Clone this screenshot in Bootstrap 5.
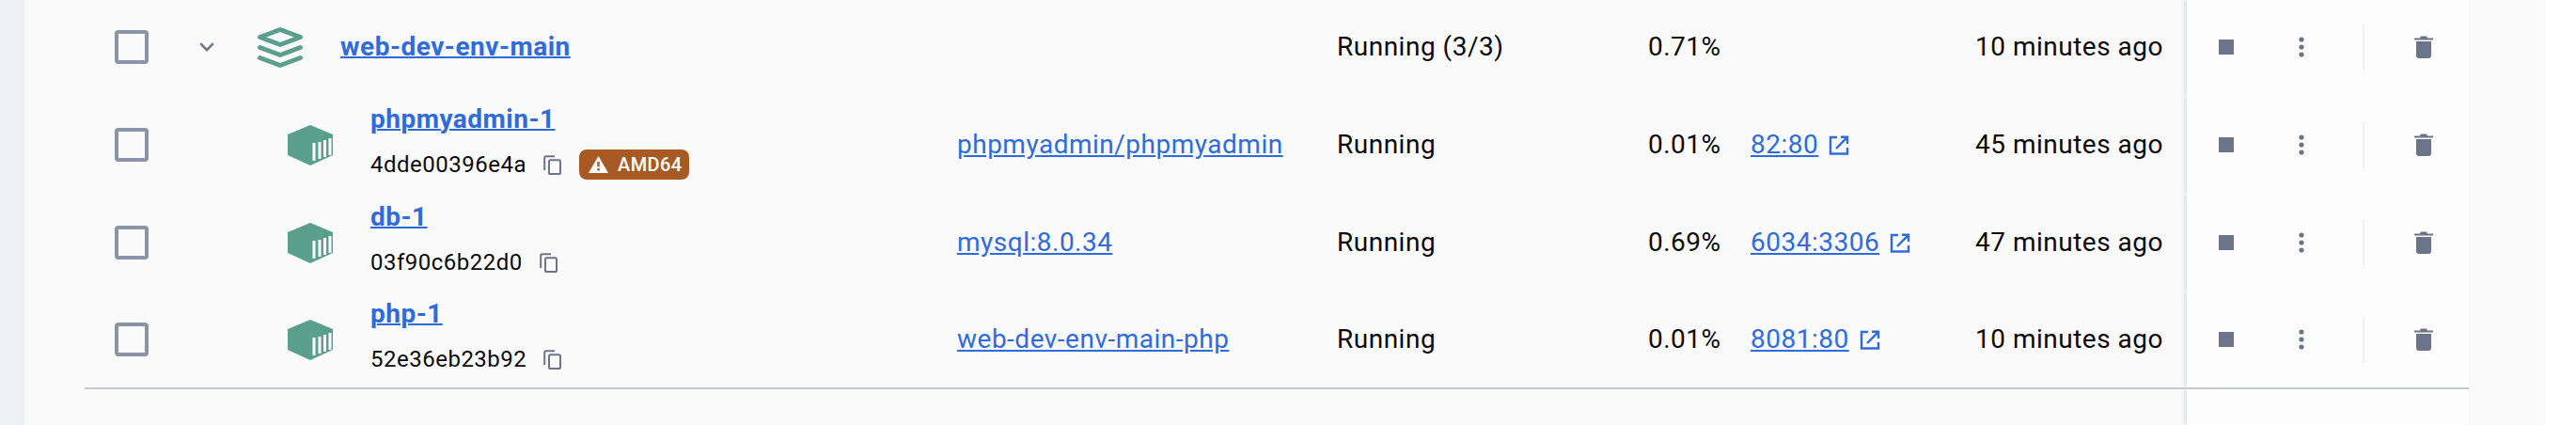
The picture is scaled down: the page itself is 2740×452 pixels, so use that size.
<!DOCTYPE html>
<html lang="en">
<head>
    <meta charset="UTF-8">
    <title>Containers</title>
    <link href="https://cdn.jsdelivr.net/npm/bootstrap@5.3.0/dist/css/bootstrap.min.css" rel="stylesheet">
    <style>
        body { background: #fff; font-family: Roboto, "Liberation Sans", sans-serif; font-size: 28px; letter-spacing: .5px; color: #0a0a0a; overflow: hidden; }
        a { color: #2f6bd9; }
        .page-rail { width: 26px; height: 452px; background: #eff0f3; flex: none; }
        .page-main { width: 2681px; height: 452px; padding-left: 64px; background: #fafafb; flex: none; }
        .app-row { height: 104px; width: 2536px; }
        .app-row.first-row { height: 102px; }
        .app-row.first-row > .cell-check, .app-row.first-row > .cell-name, .app-row.first-row > .cell-image,
        .app-row.first-row > .cell-status, .app-row.first-row > .cell-cpu, .app-row.first-row > .cell-ports,
        .app-row.first-row > .cell-time { padding-bottom: 2px; }
        .app-row.last-row { border-bottom: 2px solid #c4c8d6; height: 104px; }
        .cell-check { width: 122px; padding-left: 32px; flex: none; }
        .cell-name { width: 806px; flex: none; }
        .cell-image { width: 404px; flex: none; }
        .cell-status { width: 331px; flex: none; }
        .cell-cpu { width: 109px; flex: none; }
        .cell-ports { width: 200px; flex: none; }
        .cell-time { width: 239px; flex: none; text-align: right; }
        .cell-actions { width: 300px; margin-left: 25px; flex: none; align-self: stretch; padding-left: 34px; background: #fdfdfd; box-shadow: -3px 0 4px rgba(20, 25, 40, .1); clip-path: inset(0 0 0 -10px); }
        .first-row .cell-actions { padding-bottom: 2px; }
        .panel-rest { height: 38px; width: 300px; margin-left: 2236px; background: #fdfdfd; box-shadow: -3px 0 4px rgba(20, 25, 40, .1); clip-path: inset(0 0 0 -10px); }
        .fake-check { width: 36px; height: 36px; border: 4px solid #8b93a6; border-radius: 4px; display: block; }
        .tree-toggle { width: 16px; height: 10px; margin-right: 46px; }
        .stack-icon { width: 48px; height: 43px; margin-right: 40px; }
        .box-icon { width: 48px; height: 43px; margin-left: 94px; margin-right: 40px; }
        .name-link { font-weight: 700; letter-spacing: .5px; text-decoration-thickness: 2px; }
        .name-block { line-height: 34px; margin-bottom: 7px; }
        .id-line { font-size: 24px; letter-spacing: .5px; line-height: 32px; margin-top: 15px; }
        .copy-icon { width: 19px; height: 21px; margin-left: 18px; }
        .arch-tag { background: #a85a24; color: #fff; font-size: 20px; font-weight: 500; letter-spacing: .4px; height: 32px; width: 117px; border-radius: 8px; margin-left: 19px; padding-left: 10px; }
        .arch-tag svg { width: 21px; height: 18px; margin-right: 10px; }
        .ext-icon { width: 22px; height: 21px; margin-left: 11px; }
        .stop-icon { width: 16px; height: 16px; background: #6c7489; }
        .dots-icon { width: 6px; height: 22px; margin-left: 69px; }
        .action-sep { width: 2px; height: 48px; background: #f0f0f2; margin-left: 62px; }
        .trash-icon { width: 20px; height: 24px; margin-left: 53px; }
    </style>
</head>
<body>
    <svg width="0" height="0" class="position-absolute">
        <symbol id="i-copy" viewBox="0 0 19 21">
            <path d="M1.2 16V3a1.8 1.8 0 0 1 1.8-1.8h9" fill="none" stroke="#6c7489" stroke-width="2"/>
            <rect x="6" y="5.2" width="12" height="14.8" rx="1.6" fill="none" stroke="#6c7489" stroke-width="2"/>
        </symbol>
        <symbol id="i-box" viewBox="0 0 48 43">
            <path d="M24 0 48 10V32L24 43 0 32V10Z" fill="#5a9e8c"/>
            <path d="M28 19V38M34 18V36M39.5 16V34M45 14V32" stroke="#fff" stroke-width="3"/>
        </symbol>
        <symbol id="i-ext" viewBox="0 0 22 21">
            <path d="M9 2H2V19.500H20V13" fill="none" stroke="#2f6bd9" stroke-width="2.400"/>
            <path d="M13 1.800H20V9M19.500 2.300 8 14" fill="none" stroke="#2f6bd9" stroke-width="2.400"/>
        </symbol>
        <symbol id="i-dots" viewBox="0 0 6 22">
            <circle cx="3" cy="3" r="2.600" fill="#6c7489"/>
            <circle cx="3" cy="11" r="2.600" fill="#6c7489"/>
            <circle cx="3" cy="19" r="2.600" fill="#6c7489"/>
        </symbol>
        <symbol id="i-trash" viewBox="0 0 20 24">
            <path d="M0 2.500H6L7 .5H13L14 2.500H20V4.500H0Z" fill="#6c7489"/>
            <path d="M2 6H18V21A3 3 0 0 1 15 24H5A3 3 0 0 1 2 21Z" fill="#6c7489"/>
        </symbol>
    </svg>

    <div class="d-flex">
        <div class="page-rail"></div>
        <div class="page-main">
            <!-- group row -->
            <div class="app-row first-row d-flex align-items-center">
                <div class="cell-check"><span class="fake-check"></span></div>
                <div class="cell-name d-flex align-items-center">
                    <svg class="tree-toggle" viewBox="0 0 16 10"><path d="M1.200 1.200 8 8.200 14.800 1.200" fill="none" stroke="#6c7489" stroke-width="2.400"/></svg>
                    <svg class="stack-icon" viewBox="0 0 48 43">
                        <path d="M24 2.500 45.500 10.500 24 18.500 2.500 10.500Z" fill="none" stroke="#5a9e8c" stroke-width="5" stroke-linejoin="round"/>
                        <path d="M2.500 21.500 24 29.500 45.500 21.500M2.500 32.500 24 40.500 45.500 32.500" fill="none" stroke="#5a9e8c" stroke-width="5" stroke-linecap="round" stroke-linejoin="round"/>
                    </svg>
                    <a href="#" class="name-link">web-dev-env-main</a>
                </div>
                <div class="cell-image"></div>
                <div class="cell-status">Running (3/3)</div>
                <div class="cell-cpu">0.71%</div>
                <div class="cell-ports"></div>
                <div class="cell-time">10 minutes ago</div>
                <div class="cell-actions d-flex align-items-center">
                    <span class="stop-icon"></span>
                    <svg class="dots-icon"><use href="#i-dots"/></svg>
                    <span class="action-sep"></span>
                    <svg class="trash-icon"><use href="#i-trash"/></svg>
                </div>
            </div>

            <!-- containers -->
            <div class="app-row d-flex align-items-center">
                <div class="cell-check"><span class="fake-check"></span></div>
                <div class="cell-name d-flex align-items-center">
                    <svg class="box-icon"><use href="#i-box"/></svg>
                    <div class="name-block">
                        <a href="#" class="name-link">phpmyadmin-1</a>
                        <div class="id-line d-flex align-items-center">4dde00396e4a
                            <svg class="copy-icon"><use href="#i-copy"/></svg>
                            <span class="arch-tag d-flex align-items-center">
                                <svg viewBox="0 0 21 18"><path d="M10.500 0 21 18H0Z" fill="#fff"/><path d="M9.300 6H11.700V11.500H9.300ZM9.300 13H11.700V15.500H9.300Z" fill="#a85a24"/></svg>AMD64
                            </span>
                        </div>
                    </div>
                </div>
                <div class="cell-image"><a href="#">phpmyadmin/phpmyadmin</a></div>
                <div class="cell-status">Running</div>
                <div class="cell-cpu">0.01%</div>
                <div class="cell-ports d-flex align-items-center"><a href="#">82:80</a><svg class="ext-icon"><use href="#i-ext"/></svg></div>
                <div class="cell-time">45 minutes ago</div>
                <div class="cell-actions d-flex align-items-center">
                    <span class="stop-icon"></span>
                    <svg class="dots-icon"><use href="#i-dots"/></svg>
                    <span class="action-sep"></span>
                    <svg class="trash-icon"><use href="#i-trash"/></svg>
                </div>
            </div>

            <div class="app-row d-flex align-items-center">
                <div class="cell-check"><span class="fake-check"></span></div>
                <div class="cell-name d-flex align-items-center">
                    <svg class="box-icon"><use href="#i-box"/></svg>
                    <div class="name-block">
                        <a href="#" class="name-link">db-1</a>
                        <div class="id-line d-flex align-items-center">03f90c6b22d0
                            <svg class="copy-icon"><use href="#i-copy"/></svg>
                        </div>
                    </div>
                </div>
                <div class="cell-image"><a href="#">mysql:8.0.34</a></div>
                <div class="cell-status">Running</div>
                <div class="cell-cpu">0.69%</div>
                <div class="cell-ports d-flex align-items-center"><a href="#">6034:3306</a><svg class="ext-icon"><use href="#i-ext"/></svg></div>
                <div class="cell-time">47 minutes ago</div>
                <div class="cell-actions d-flex align-items-center">
                    <span class="stop-icon"></span>
                    <svg class="dots-icon"><use href="#i-dots"/></svg>
                    <span class="action-sep"></span>
                    <svg class="trash-icon"><use href="#i-trash"/></svg>
                </div>
            </div>

            <div class="app-row last-row d-flex align-items-center">
                <div class="cell-check"><span class="fake-check"></span></div>
                <div class="cell-name d-flex align-items-center">
                    <svg class="box-icon"><use href="#i-box"/></svg>
                    <div class="name-block">
                        <a href="#" class="name-link">php-1</a>
                        <div class="id-line d-flex align-items-center">52e36eb23b92
                            <svg class="copy-icon"><use href="#i-copy"/></svg>
                        </div>
                    </div>
                </div>
                <div class="cell-image"><a href="#">web-dev-env-main-php</a></div>
                <div class="cell-status">Running</div>
                <div class="cell-cpu">0.01%</div>
                <div class="cell-ports d-flex align-items-center"><a href="#">8081:80</a><svg class="ext-icon"><use href="#i-ext"/></svg></div>
                <div class="cell-time">10 minutes ago</div>
                <div class="cell-actions d-flex align-items-center">
                    <span class="stop-icon"></span>
                    <svg class="dots-icon"><use href="#i-dots"/></svg>
                    <span class="action-sep"></span>
                    <svg class="trash-icon"><use href="#i-trash"/></svg>
                </div>
            </div>
            <div class="panel-rest"></div>
        </div>
    </div>

    <script src="https://cdn.jsdelivr.net/npm/bootstrap@5.3.0/dist/js/bootstrap.bundle.min.js"></script>
</body>
</html>
